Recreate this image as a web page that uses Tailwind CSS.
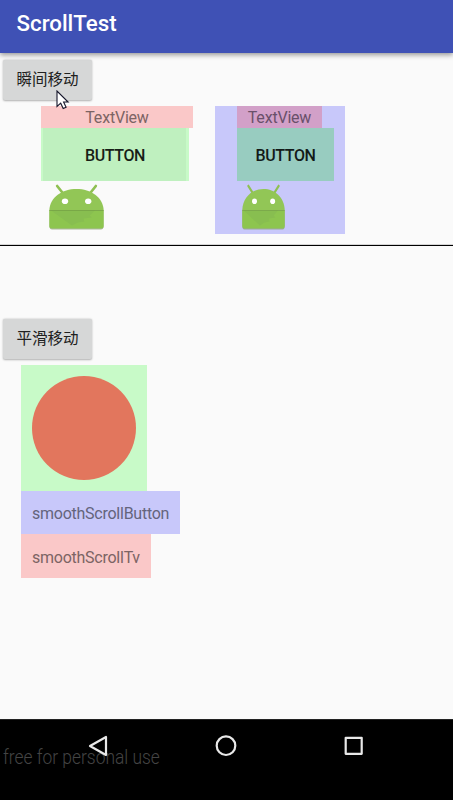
<!DOCTYPE html>
<html lang="zh">
<head>
<meta charset="utf-8">
<title>ScrollTest</title>
<script src="https://cdn.jsdelivr.net/npm/@tailwindcss/browser@4"></script>
</head>
<body class="w-[453px] h-[800px] overflow-hidden bg-[#fafafa] font-['Roboto','Noto_Sans_CJK_SC',sans-serif]">
<svg class="hidden">
  <symbol id="robot" viewBox="0 0 54 46" preserveAspectRatio="none">
    <path d="M8 2 13.500 9M46 2 40.500 9" stroke="#8fc052" stroke-width="2.600" stroke-linecap="round" fill="none"/>
    <path d="M.5 27h53v15.500q0 2.900-2.500 2.900H3Q.5 45.400.5 42.500z" fill="#8b9b78" opacity=".7"/>
    <path d="M.3 26.500C.8 13 13 5 27 5S53.200 13 53.700 26.500z" fill="#92c656"/>
    <path d="M.3 26.500h53.400v15.500q0 2.500-2.500 2.500H2.800Q.3 44.500.3 42z" fill="#8dc54f"/>
    <path d="M2 26.500h43l-5 5 2 2-8 1 .5 3-6 1-6 3z" fill="#88be50"/>
    <path d="M.3 26.500h53.400" stroke="#76a444" stroke-width=".9"/>
    <ellipse cx="15.700" cy="17.300" rx="3.100" ry="2.800" fill="#fff"/>
    <ellipse cx="38.500" cy="17.300" rx="3.100" ry="2.800" fill="#fff"/>
  </symbol>
</svg>
<div class="flex flex-col h-full">
  <header class="relative z-10 h-[53px] shrink-0 bg-[#3f51b5] pl-[16.500px] pb-[6px] flex items-center text-white text-[22.300px] font-medium shadow-[0_2px_5px_rgba(0,0,0,0.4)]">ScrollTest</header>
  <section class="h-[193px] shrink-0 border-b border-black pt-[7px] relative shadow-[inset_0_-1px_0_#d4d4d4]">
    <button class="block ml-[3px] w-[89px] h-[40px] pt-[2px] rounded-[2px] bg-[#d6d7d7] text-[15.500px] text-[#202020] shadow-[0_0.500px_2px_rgba(0,0,0,0.3)]">瞬间移动</button>
    <div class="flex mt-[6px] ml-[41px]">
      <div class="w-[174px] h-[128px]">
        <div class="w-[152px] h-[22px] bg-[#fac8c8] text-[#7c6464] text-[16px] tracking-[-0.200px] leading-[24px] text-center">TextView</div>
        <div class="w-[148px] h-[53px] bg-[#c8fac8] pl-[2px] pr-[3px]"><div class="h-full bg-[#bff0bf] flex items-center justify-center pl-px pt-[2px] text-[16px] tracking-[-0.400px] font-medium text-[#181e18]">BUTTON</div></div>
        <svg class="block mt-[3px] ml-[8px] w-[55px] h-[46px]"><use href="#robot"/></svg>
      </div>
      <div class="w-[130px] h-[128px] bg-[#c8c8fa] pl-[22px]">
        <div class="w-[85px] h-[22px] bg-[#d2a0c8] text-[#69506a] text-[16px] tracking-[-0.200px] leading-[24px] text-center">TextView</div>
        <div class="w-[97px] h-[53px] bg-[#98ccc0] flex items-center justify-center pt-[2px] text-[16px] tracking-[-0.400px] font-medium text-[#131a18]">BUTTON</div>
        <svg class="block mt-[3px] ml-[5px] w-[43px] h-[46px]"><use href="#robot"/></svg>
      </div>
    </div>
    <svg class="absolute left-[56px] top-[36.500px] w-[14px] h-[21px]" viewBox="0 0 14 21"><path d="M1 1v15.500l3.700-3.300 2.500 5.300 2.900-1.300-2.500-5.200h4.500z" fill="#fff" stroke="#15152a" stroke-width="1.100"/></svg>
  </section>
  <section class="flex-1 pt-[73px]">
    <button class="block ml-[3px] w-[89px] h-[40px] pt-[2px] rounded-[2px] bg-[#d6d7d7] text-[15.500px] text-[#202020] shadow-[0_0.500px_2px_rgba(0,0,0,0.3)]">平滑移动</button>
    <div class="ml-[21px] mt-[6px] flex flex-col text-[16px] tracking-[-0.250px]">
      <div class="w-[126px] h-[126px] bg-[#c8fac8] p-[11px]"><div class="w-[104px] h-[104px] rounded-full bg-[#e2765d]"></div></div>
      <div class="w-[159px] h-[43px] bg-[#c8c8fa] pl-[11px] pt-[3px] flex items-center text-[#64647c]">smoothScrollButton</div>
      <div class="w-[130px] h-[44px] bg-[#fac8c8] pl-[11px] pt-[3px] flex items-center text-[#7c6464]">smoothScrollTv</div>
    </div>
  </section>
  <footer class="relative h-[81px] shrink-0 bg-black border-t border-[#222]">
    <div class="absolute left-[2.500px] top-[25px] text-[20px] leading-6 font-light text-[#444] whitespace-nowrap origin-left scale-x-[0.870]">free for personal use</div>
    <nav class="relative flex gap-[104px] pt-[14px] pl-[86px]">
      <svg class="w-6 h-6" viewBox="0 0 24 24" fill="none" stroke="#e8e8e8" stroke-width="2.200" stroke-linejoin="round"><path d="M4 12 20 3v18z"/></svg>
      <svg class="w-6 h-6" viewBox="0 0 24 24" fill="none" stroke="#e8e8e8" stroke-width="2.200"><circle cx="12" cy="11.700" r="9.300"/></svg>
      <svg class="w-6 h-6" viewBox="0 0 24 24" fill="none" stroke="#e8e8e8" stroke-width="2.200" stroke-linejoin="round"><path d="M3.700 3.800h16v16h-16z"/></svg>
    </nav>
  </footer>
</div>
</body>
</html>
